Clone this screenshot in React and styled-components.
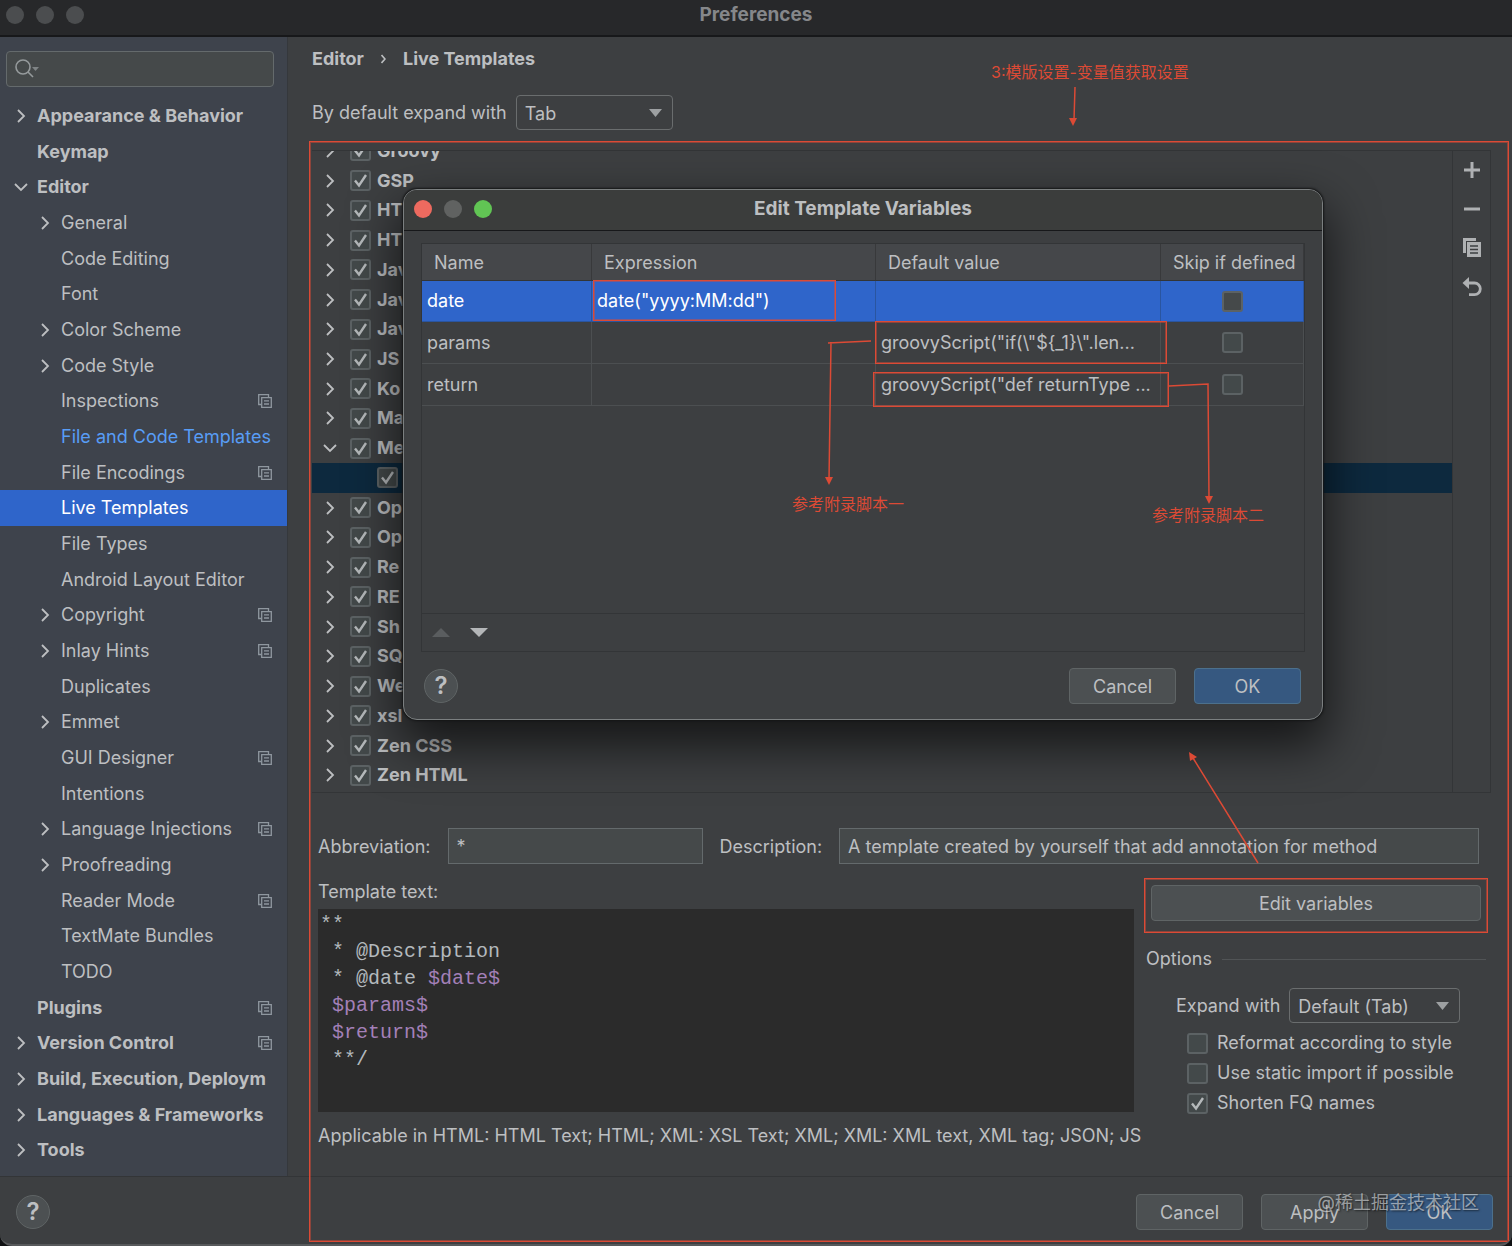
import React from "react";
import styled, { createGlobalStyle, css } from "styled-components";

const GlobalStyle = createGlobalStyle`
  * {
    box-sizing: border-box;
  }
  body {
    margin: 0;
    background: #101113;
  }
  button, input, select {
    font: inherit;
    color: inherit;
    margin: 0;
  }
`

const red = "#dc4a35";

const Window = styled.div`
  position: relative;
  display: flex;
  flex-direction: column;
  min-height: 100vh;
  overflow: hidden;
  background: #3d3f41;
  color: #bdbfc1;
  font-family: Inter, "Noto Sans CJK SC", sans-serif;
  font-size: 18px;
  line-height: 24px;
  border-bottom: 2px solid #57595b;
  border-radius: 0 0 12px 12px;
`

const TitleBar = styled.header`
  position: relative;
  display: flex;
  align-items: center;
  justify-content: center;
  height: ${(props) => (props.$dialog ? 41 : 37)}px;
  padding-bottom: ${(props) => (props.$dialog ? 2 : 6)}px;
  background: ${(props) => (props.$dialog ? "#3b3d3c" : "#27282a")};
  border-bottom: ${(props) => (props.$dialog ? 1 : 2)}px solid #17181a;
  color: ${(props) => (props.$dialog ? "#bdbfc1" : "#85878a")};
  font-size: 19px;
  font-weight: 700;
`

const Lights = styled.div`
  position: absolute;
  left: ${(props) => (props.$dialog ? 10 : 6)}px;
  top: ${(props) => (props.$dialog ? 10 : 6)}px;
  display: flex;
  gap: 12px;
`

const Light = styled.button`
  width: 18px;
  height: 18px;
  padding: 0;
  border: none;
  border-radius: 50%;
  background: ${(props) => props.$color};
`

const Body = styled.div`
  flex: 1;
  display: flex;
`

const Sidebar = styled.nav`
  flex: 0 0 288px;
  min-width: 0;
  display: flex;
  flex-direction: column;
  padding: 14px 0 8px;
  background: #3e434c;
  border-right: 1px solid #35383c;
`

const SearchBox = styled.label`
  display: flex;
  align-items: center;
  height: 36px;
  margin: 0 13px 11px 6px;
  padding: 0 8px;
  background: #45494a;
  border: 1px solid #646a6c;
  border-radius: 4px;
`

const SearchInput = styled.input`
  flex: 1;
  min-width: 0;
  border: none;
  outline: none;
  background: transparent;
`

const Tree = styled.ul`
  flex: 1;
  display: flex;
  flex-direction: column;
  margin: 0;
  padding: 0;
  list-style: none;
`

const TreeItem = styled.li`
  flex: 1;
  display: flex;
  align-items: center;
  padding: 0 15px 0 ${(props) => (props.$child ? 37 : 13)}px;
  font-weight: ${(props) => (props.$child ? 400 : 700)};
  background: ${(props) => (props.$selected ? "#2f65ca" : "transparent")};
  color: ${(props) => (props.$selected ? "#ffffff" : props.$changed ? "#589df6" : "inherit")};
`

const TreeLink = styled.a`
  flex: 1;
  white-space: nowrap;
  color: inherit;
  text-decoration: none;
`

const ArrowSlot = styled.span`
  flex: 0 0 24px;
  display: flex;
`

const Content = styled.main`
  flex: 1;
  min-width: 0;
  display: flex;
  flex-direction: column;
  padding: 10px 21px 28px 24px;
`

const Breadcrumb = styled.div`
  display: flex;
  align-items: center;
  gap: 17px;
  font-weight: 700;
`

const ExpandRow = styled.div`
  display: flex;
  align-items: center;
  gap: 9px;
  margin: 24px 0 20px;
`

const SelectWrap = styled.div`
  position: relative;
  display: flex;
  align-items: center;
  width: ${(props) => props.$width}px;
`

const Select = styled.select`
  appearance: none;
  width: 100%;
  height: 35px;
  padding: 2px 8px 0;
  background: #3d3f41;
  border: 1px solid #6a6d6e;
  border-radius: 4px;
`

const SelectArrow = styled.svg`
  position: absolute;
  right: 11px;
  pointer-events: none;
`

const TemplatePanel = styled.section`
  flex: 1 1 0;
  min-height: 400px;
  display: flex;
  border: 1px solid #333537;
  border-left: none;
`

const TemplateList = styled.div`
  flex: 1;
  display: flex;
  flex-direction: column;
  overflow: hidden;
  padding-bottom: 2px;
`

const TemplateRows = styled.ul`
  flex: 1;
  display: flex;
  flex-direction: column;
  margin: -15px 0 0;
  padding: 0;
  list-style: none;
`

const TemplateRow = styled.li`
  flex: 1 1 0;
  min-height: 0;
  display: flex;
  align-items: center;
  padding-left: ${(props) => (props.$child ? 65 : 10)}px;
  background: ${(props) => (props.$selected ? "#0d293e" : "transparent")};
  font-weight: 700;
`

const TemplateArrow = styled.span`
  flex: 0 0 28px;
  display: flex;
`

const CheckLabel = styled.label`
  display: flex;
  align-items: center;
  gap: ${(props) => props.$gap || 6}px;
  height: 30px;
`

const Checkbox = styled.input.attrs({ type: "checkbox" })`
  appearance: none;
  display: block;
  width: 21px;
  height: 21px;
  border: 2px solid #5c6264;
  border-radius: 3px;
  background-color: #43494a;
  &:checked {
    background-image: url("data:image/svg+xml,%3Csvg xmlns='http://www.w3.org/2000/svg' viewBox='0 0 17 17'%3E%3Cpath d='M3 8.5 L7 13.5 L14 3' fill='none' stroke='%23b4b8ba' stroke-width='2.4'/%3E%3C/svg%3E");
  }
`

const CellCheckbox = styled(Checkbox)`
  margin: 0 auto;
`

const SideTools = styled.div`
  flex: 0 0 38px;
  display: flex;
  flex-direction: column;
  align-items: center;
  gap: 15px;
  padding-top: 7px;
  border-left: 1px solid #333537;
`

const ToolButton = styled.button`
  display: flex;
  align-items: center;
  justify-content: center;
  width: 24px;
  height: 24px;
  padding: 0;
  border: none;
  background: none;
`

const FieldsRow = styled.div`
  display: flex;
  align-items: center;
  margin: 35px 12px 0 6px;
`

const FieldLabel = styled.label`
  margin-right: 17px;
  padding-top: 2px;
  white-space: nowrap;
`

const TextField = styled.input`
  flex: ${(props) => (props.$width ? `0 1 ${props.$width}px` : "1")};
  min-width: 0;
  height: 36px;
  padding: 0 8px;
  background: #45494a;
  border: 1px solid #646a6c;
  outline: none;
  & + label {
    margin-left: 17px;
  }
`

const EditorRow = styled.div`
  display: flex;
  gap: 12px;
  margin: 16px 5px 0 6px;
`

const EditorColumn = styled.div`
  flex: 1;
  min-width: 0;
`

const Code = styled.div`
  height: 203px;
  margin: 5px 0 12px;
  padding: 2px;
  background: #2b2b2b;
  color: #b3b9bd;
  font-family: "Liberation Mono", monospace;
  font-size: 20px;
  line-height: 27px;
  white-space: pre;
  outline: none;
`

const Variable = styled.span`
  color: #a380b8;
`

const Applicable = styled.div`
  white-space: nowrap;
`

const OptionsColumn = styled.div`
  flex: 0 0 340px;
  display: flex;
  flex-direction: column;
`

const Button = styled.button`
  height: 36px;
  min-width: 107px;
  padding: 2px 12px 0;
  background: ${(props) => (props.$primary ? "#365880" : "#4c5052")};
  border: 1px solid ${(props) => (props.$primary ? "#4c708c" : "#5f6465")};
  border-radius: 4px;
`

const EditButton = styled(Button)`
  margin: 5px 5px 0;
`

const OptionsTitle = styled.div`
  display: flex;
  align-items: center;
  gap: 10px;
  margin: 26px 0 17px;
  &::after {
    content: "";
    flex: 1;
    border-top: 1px solid #515456;
  }
`

const OptionRow = styled.div`
  display: flex;
  align-items: center;
  gap: 9px;
  margin: 0 0 5px 30px;
`

const OptionChecks = styled.div`
  padding-left: 41px;
`

const Footer = styled.footer`
  display: flex;
  align-items: center;
  gap: 18px;
  height: 68px;
  padding: 2px 19px 0 16px;
  border-top: 1px solid #333537;
`

const HelpButton = styled.button`
  width: 34px;
  height: 34px;
  margin-right: auto;
  padding: 0;
  background: #4c5052;
  border: 1px solid #5f6465;
  border-radius: 50%;
  font-size: 24px;
  font-weight: 600;
`

const Dialog = styled.section`
  position: absolute;
  left: 403px;
  top: 189px;
  width: 920px;
  height: 531px;
  display: flex;
  flex-direction: column;
  background: #3d3f41;
  border: 1px solid #7b7f80;
  border-radius: 14px;
  box-shadow: 0 0 2px 1px #151617, 0 22px 50px 4px rgba(0, 0, 0, 0.65);
  & > header {
    border-radius: 13px 13px 0 0;
  }
`

const TableBox = styled.div`
  flex: 1;
  display: flex;
  flex-direction: column;
  margin: 12px 17px 16px;
  border: 1px solid #333537;
`

const Table = styled.table`
  width: 100%;
  table-layout: fixed;
  border-collapse: separate;
  border-spacing: 0;
  text-align: left;
`

const HeadCell = styled.th`
  width: ${(props) => (props.$width ? `${props.$width}px` : "auto")};
  height: 37px;
  padding: 2px 0 0 12px;
  background: #45474a;
  border-bottom: 1px solid #333537;
  border-right: 1px solid #38393b;
  font-weight: 400;
  white-space: nowrap;
`

const Cell = styled.td`
  height: ${(props) => (props.$selected ? 41 : 42)}px;
  padding: 0 5px;
  border-bottom: 1px solid #4c4f51;
  border-right: 1px solid #4c4f51;
  white-space: nowrap;
  ${(props) => props.$selected && css`
    background: #2f65ca;
    border-color: #2a559f;
    color: #ffffff;
    input {
      background-color: #45494a;
    }
  `}
`

const MoveBar = styled.div`
  display: flex;
  align-items: center;
  gap: 14px;
  height: 38px;
  margin-top: auto;
  padding-left: 7px;
  border-top: 1px solid #333537;
`

const DialogButtons = styled.div`
  display: flex;
  align-items: center;
  gap: 18px;
  padding: 0 21px 15px 20px;
`

const MarkBox = styled.div`
  position: absolute;
  left: ${(props) => props.$left}px;
  top: ${(props) => props.$top}px;
  width: ${(props) => props.$width}px;
  height: ${(props) => props.$height}px;
  border: 1px solid ${red};
  box-shadow: inset 0 0 0 1px rgba(220, 74, 53, 0.5);
  pointer-events: none;
`

const MarkFrame = styled.div`
  position: absolute;
  left: 309px;
  top: 141px;
  right: 3px;
  bottom: 2px;
  border: 1px solid ${red};
  box-shadow: inset 0 0 0 1px rgba(220, 74, 53, 0.5);
  pointer-events: none;
`

const MarkText = styled.div`
  position: absolute;
  left: ${(props) => props.$left}px;
  top: ${(props) => props.$top}px;
  color: ${red};
  font-size: 16px;
  white-space: nowrap;
`

const MarkArrows = styled.svg`
  position: absolute;
  left: 0;
  top: 0;
  pointer-events: none;
`

const Watermark = styled.div`
  position: absolute;
  right: 33px;
  bottom: 29px;
  color: rgba(225, 228, 230, 0.6);
  font-size: 18px;
  text-shadow: 1px 1px 2px rgba(0, 0, 0, 0.6);
  pointer-events: none;
`

const settings = [
  { name: "Appearance & Behavior", arrow: "right" },
  { name: "Keymap" },
  { name: "Editor", arrow: "down" },
  { name: "General", child: true, arrow: "right" },
  { name: "Code Editing", child: true },
  { name: "Font", child: true },
  { name: "Color Scheme", child: true, arrow: "right" },
  { name: "Code Style", child: true, arrow: "right" },
  { name: "Inspections", child: true, project: true },
  { name: "File and Code Templates", child: true, changed: true },
  { name: "File Encodings", child: true, project: true },
  { name: "Live Templates", child: true, selected: true },
  { name: "File Types", child: true },
  { name: "Android Layout Editor", child: true },
  { name: "Copyright", child: true, arrow: "right", project: true },
  { name: "Inlay Hints", child: true, arrow: "right", project: true },
  { name: "Duplicates", child: true },
  { name: "Emmet", child: true, arrow: "right" },
  { name: "GUI Designer", child: true, project: true },
  { name: "Intentions", child: true },
  { name: "Language Injections", child: true, arrow: "right", project: true },
  { name: "Proofreading", child: true, arrow: "right" },
  { name: "Reader Mode", child: true, project: true },
  { name: "TextMate Bundles", child: true },
  { name: "TODO", child: true },
  { name: "Plugins", project: true },
  { name: "Version Control", arrow: "right", project: true },
  { name: "Build, Execution, Deploym", arrow: "right" },
  { name: "Languages & Frameworks", arrow: "right" },
  { name: "Tools", arrow: "right" },
];

const templates = [
  "Groovy", "GSP", "HT", "HT", "Jav", "Jav", "Jav", "JS", "Ko", "Ma", "Me", "",
  "Op", "Op", "Re", "RE", "Sh", "SQ", "We", "xsl", "Zen CSS", "Zen HTML",
];

const variables = [
  { name: "date", expression: 'date("yyyy:MM:dd")', value: "", selected: true },
  { name: "params", expression: "", value: 'groovyScript("if(\\"${_1}\\".len...' },
  { name: "return", expression: "", value: 'groovyScript("def returnType ...' },
];

const Chevron = ({ down }) => (
  <svg width="16" height="16" viewBox="0 0 16 16" fill="none" stroke="#bdbfc1" strokeWidth="1.8">
    <path d={down ? "M2 5 L8 11 L14 5" : "M5 2 L11 8 L5 14"} />
  </svg>
);

const ProjectIcon = () => (
  <svg width="14" height="14" viewBox="0 0 14 14" fill="none" stroke="#8f979f" strokeWidth="1.3">
    <path d="M3 10.5 H0.7 V0.7 H10.5 V3" />
    <path d="M3.7 3.7 H13.3 V13.3 H3.7 Z M6 6.8 H11 M6 10 H11" />
  </svg>
);

const DropArrow = () => (
  <SelectArrow width="13" height="8" viewBox="0 0 13 8">
    <path d="M0 0 H13 L6.5 8 Z" fill="#9da0a2" />
  </SelectArrow>
);

const EditVariablesDialog = () => (
  <Dialog role="dialog" aria-label="Edit Template Variables">
    <TitleBar $dialog>
      <Lights $dialog>
        <Light $color="#ed6a5f" aria-label="Close" />
        <Light $color="#606261" aria-label="Minimize" />
        <Light $color="#61c554" aria-label="Zoom" />
      </Lights>
      Edit Template Variables
    </TitleBar>
    <TableBox>
      <Table>
        <thead>
          <tr>
            <HeadCell $width={170}>Name</HeadCell>
            <HeadCell $width={284}>Expression</HeadCell>
            <HeadCell $width={285}>Default value</HeadCell>
            <HeadCell>Skip if defined</HeadCell>
          </tr>
        </thead>
        <tbody>
          {variables.map((v) => (
            <tr key={v.name}>
              <Cell $selected={v.selected}>{v.name}</Cell>
              <Cell $selected={v.selected}>{v.expression}</Cell>
              <Cell $selected={v.selected}>{v.value}</Cell>
              <Cell $selected={v.selected}>
                <CellCheckbox aria-label={`Skip ${v.name} if defined`} />
              </Cell>
            </tr>
          ))}
        </tbody>
      </Table>
      <MoveBar>
        <ToolButton aria-label="Move up">
          <svg width="18" height="9" viewBox="0 0 18 9"><path d="M0 9 L9 0 L18 9 Z" fill="#5a5d5f" /></svg>
        </ToolButton>
        <ToolButton aria-label="Move down">
          <svg width="18" height="9" viewBox="0 0 18 9"><path d="M0 0 H18 L9 9 Z" fill="#b4b6b8" /></svg>
        </ToolButton>
      </MoveBar>
    </TableBox>
    <DialogButtons>
      <HelpButton aria-label="Help">?</HelpButton>
      <Button>Cancel</Button>
      <Button $primary>OK</Button>
    </DialogButtons>

    <MarkBox $left={189} $top={90} $width={243} $height={41} />
    <MarkBox $left={471} $top={131} $width={292} $height={43} />
    <MarkBox $left={469} $top={182} $width={296} $height={35} />
    <MarkArrows width="918" height="529" fill="none" stroke={red} strokeWidth="1.5">
      <path d="M467 151 L424 153 M427 152 L425 290" />
      <path d="M765 196 L804 194 L805 308" />
      <path d="M421 287 H429 L425 295 Z M801 306 H809 L805 314 Z" fill={red} stroke="none" />
    </MarkArrows>
    <MarkText $left={388} $top={302}>参考附录脚本一</MarkText>
    <MarkText $left={748} $top={313}>参考附录脚本二</MarkText>
  </Dialog>
);

export default class App extends React.Component {
  state = {
    abbreviation: "*",
    description: "A template created by yourself that add annotation for method",
  };

  newAbbreviation = (e) => {
    this.setState({ abbreviation: e.target.value });
  };

  newDescription = (e) => {
    this.setState({ description: e.target.value });
  };

  render() {
    return (
      <Window>
        <GlobalStyle />
        <TitleBar>
          <Lights>
            <Light $color="#4b4d4f" aria-label="Close" />
            <Light $color="#4b4d4f" aria-label="Minimize" />
            <Light $color="#4b4d4f" aria-label="Zoom" />
          </Lights>
          Preferences
        </TitleBar>
        <Body>
          <Sidebar>
            <SearchBox>
              <svg width="25" height="20" viewBox="0 0 25 20" fill="none" stroke="#959a9c" strokeWidth="1.6">
                <circle cx="8" cy="8" r="7" />
                <path d="M13 13 L18 18" />
                <path d="M17 8 H24 L20.5 12 Z" fill="#7f8486" stroke="none" />
              </svg>
              <SearchInput aria-label="Search settings" />
            </SearchBox>
            <Tree>
              {settings.map((item) => (
                <TreeItem
                  key={item.name}
                  $child={item.child}
                  $selected={item.selected}
                  $changed={item.changed}
                >
                  <ArrowSlot>{item.arrow && <Chevron down={item.arrow === "down"} />}</ArrowSlot>
                  <TreeLink href="#">{item.name}</TreeLink>
                  {item.project && <ProjectIcon />}
                </TreeItem>
              ))}
            </Tree>
          </Sidebar>

          <Content>
            <Breadcrumb>
              <span>Editor</span>
              <svg width="5" height="10" viewBox="0 0 5 10" fill="none" stroke="#bdbfc1" strokeWidth="1.6">
                <path d="M0.5 1 L4 5 L0.5 9" />
              </svg>
              <span>Live Templates</span>
            </Breadcrumb>
            <ExpandRow>
              <label htmlFor="expand">By default expand with</label>
              <SelectWrap $width={157}>
                <Select id="expand">
                  <option>Tab</option>
                </Select>
                <DropArrow />
              </SelectWrap>
            </ExpandRow>

            <TemplatePanel>
              <TemplateList>
                <TemplateRows>
                  {templates.map((name, i) => (
                    <TemplateRow key={i} $child={!name} $selected={!name}>
                      {name && (
                        <TemplateArrow>
                          <Chevron down={name === "Me"} />
                        </TemplateArrow>
                      )}
                      <CheckLabel>
                        <Checkbox defaultChecked aria-label={name || "Template"} />
                        {name}
                      </CheckLabel>
                    </TemplateRow>
                  ))}
                </TemplateRows>
              </TemplateList>
              <SideTools>
                <ToolButton aria-label="Add">
                  <svg width="16" height="16" viewBox="0 0 16 16"><path d="M6.5 0 H9.5 V6.5 H16 V9.5 H9.5 V16 H6.5 V9.5 H0 V6.5 H6.5 Z" fill="#afb1b3" /></svg>
                </ToolButton>
                <ToolButton aria-label="Remove">
                  <svg width="16" height="16" viewBox="0 0 16 16"><path d="M0 6.5 H16 V9.5 H0 Z" fill="#afb1b3" /></svg>
                </ToolButton>
                <ToolButton aria-label="Duplicate">
                  <svg width="20" height="20" viewBox="0 0 20 20">
                    <path d="M1 0 H14 V3 H4 V15 H1 Z" fill="#afb1b3" />
                    <path d="M5 4 H19 V19 H5 Z" fill="#afb1b3" />
                    <path d="M8 8 H16 M8 11.5 H16 M8 15 H16" stroke="#3d3f41" strokeWidth="1.3" />
                  </svg>
                </ToolButton>
                <ToolButton aria-label="Revert">
                  <svg width="20" height="20" viewBox="0 0 20 20">
                    <path d="M5 6 H12.5 A5.8 5.8 0 0 1 12.5 17.6 H7" fill="none" stroke="#afb1b3" strokeWidth="2.8" />
                    <path d="M7 0 V12 L0.5 6 Z" fill="#afb1b3" />
                  </svg>
                </ToolButton>
              </SideTools>
            </TemplatePanel>

            <FieldsRow>
              <FieldLabel htmlFor="abbreviation">Abbreviation:</FieldLabel>
              <TextField
                id="abbreviation"
                $width={255}
                value={this.state.abbreviation}
                onChange={this.newAbbreviation}
              />
              <FieldLabel htmlFor="description">Description:</FieldLabel>
              <TextField
                id="description"
                value={this.state.description}
                onChange={this.newDescription}
              />
            </FieldsRow>

            <EditorRow>
              <EditorColumn>
                <div id="template-text">Template text:</div>
                <Code
                  role="textbox"
                  aria-multiline="true"
                  aria-labelledby="template-text"
                  contentEditable
                  suppressContentEditableWarning
                  spellCheck={false}
                >
                  {"**\n * @Description\n * @date "}
                  <Variable>$date$</Variable>
                  {"\n "}
                  <Variable>$params$</Variable>
                  {"\n "}
                  <Variable>$return$</Variable>
                  {"\n **/"}
                </Code>
                <Applicable>
                  Applicable in HTML: HTML Text; HTML; XML: XSL Text; XML; XML: XML text, XML tag; JSON; JS
                </Applicable>
              </EditorColumn>
              <OptionsColumn>
                <EditButton>Edit variables</EditButton>
                <OptionsTitle>Options</OptionsTitle>
                <OptionRow>
                  <label htmlFor="expand-option">Expand with</label>
                  <SelectWrap $width={171}>
                    <Select id="expand-option">
                      <option>Default (Tab)</option>
                    </Select>
                    <DropArrow />
                  </SelectWrap>
                </OptionRow>
                <OptionChecks>
                  <CheckLabel $gap={9}><Checkbox />Reformat according to style</CheckLabel>
                  <CheckLabel $gap={9}><Checkbox />Use static import if possible</CheckLabel>
                  <CheckLabel $gap={9}><Checkbox defaultChecked />Shorten FQ names</CheckLabel>
                </OptionChecks>
              </OptionsColumn>
            </EditorRow>
          </Content>
        </Body>
        <Footer>
          <HelpButton aria-label="Help">?</HelpButton>
          <Button>Cancel</Button>
          <Button>Apply</Button>
          <Button $primary>OK</Button>
        </Footer>

        <EditVariablesDialog />

        <MarkFrame />
        <MarkBox $left={1144} $top={878} $width={344} $height={55} />
        <MarkArrows width="1512" height="1246" fill="none" stroke={red} strokeWidth="1.5">
          <path d="M1075 87 L1074 120 M1258 863 L1193 758" />
          <path d="M1069 118 H1077 L1073 126 Z M1189 752 L1197 757 L1190 761 Z" fill={red} stroke="none" />
        </MarkArrows>
        <MarkText $left={991} $top={60}>3:模版设置-变量值获取设置</MarkText>
        <Watermark>@稀土掘金技术社区</Watermark>
      </Window>
    );
  }
}
